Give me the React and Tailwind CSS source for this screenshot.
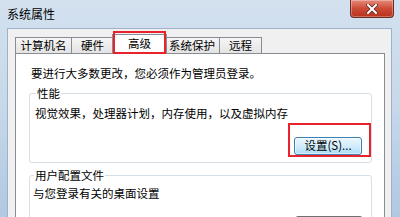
import React from "react";

const font = { fontFamily: '"Noto Sans CJK SC", "Noto Sans", sans-serif' };

function Tab({ label, w, selected }) {
  if (selected) {
    return (
      <div
        className="relative z-10 -mb-px flex h-[20px] items-center justify-center border border-b-0 border-[#898c95] bg-white text-[11.5px] leading-none text-black"
        style={{ width: w }}
      >
        <span className="-mt-px">{label}</span>
      </div>
    );
  }
  return (
    <div
      className="-ml-px flex h-[16px] items-center justify-center border border-b-0 border-[#898c95] bg-gradient-to-b from-[#f6f6f6] to-[#e3e3e3] text-[11.5px] leading-none text-black first:ml-0"
      style={{ width: w }}
    >
      {label}
    </div>
  );
}

function Button({ children, active }) {
  return (
    <div
      className={
        active
          ? "flex h-[18px] w-[68px] items-center justify-center rounded-[3px] border border-[#3c7fb1] bg-gradient-to-b from-[#eaf6fd] via-[#d3eefc] to-[#a9dbf6] text-[11.5px] leading-none text-black shadow-[inset_0_0_0_1px_rgba(255,255,255,0.6)]"
          : "flex h-[18px] w-[68px] items-center justify-center rounded-[3px] border border-[#707070] bg-gradient-to-b from-[#f2f2f2] via-[#ebebeb] to-[#cfcfcf] text-[11.5px] leading-none text-black"
      }
    >
      {children}
    </div>
  );
}

export default function App() {
  return (
    <div
      className="relative h-[217px] w-[400px] overflow-hidden bg-gradient-to-b from-[#d3e1ef] via-[#c6d8ea] to-[#b0c8e1]"
      style={font}
    >
      {/* title bar */}
      <div className="flex h-[28px] items-center pl-[7px] text-[12px] leading-none text-black">
        系统属性
      </div>
      {/* close button */}
      <div className="absolute right-[6px] top-0 flex h-[18px] w-[44px] items-center justify-center rounded-b-[4px] border border-t-0 border-[#6d2c22] bg-gradient-to-b from-[#e5897b] via-[#cc4a35] to-[#b9311d] shadow-[inset_0_0_0_1px_rgba(255,255,255,0.3)]">
        <svg width="12" height="10" viewBox="0 0 12 10">
          <path d="M2 1 L10 9 M10 1 L2 9" stroke="#5a2a24" strokeWidth="3.6" strokeLinecap="square" />
          <path d="M2 1 L10 9 M10 1 L2 9" stroke="#ffffff" strokeWidth="2" strokeLinecap="square" />
        </svg>
      </div>

      {/* dialog body */}
      <div className="ml-[7px] mr-[8px] h-[189px] border border-b-0 border-[#9fb1c7] bg-[#f0f0f0] pl-[7px] pr-[6px] pt-[5px]">
        {/* tabs */}
        <div className="flex items-end">
          <Tab label="计算机名" w={57} />
          <Tab label="硬件" w={43} />
          <div className="-ml-[2px] -mr-[2px]">
            <Tab label="高级" w={55} selected />
          </div>
          <Tab label="系统保护" w={56} />
          <Tab label="远程" w={43} />
        </div>
        {/* panel */}
        <div className="h-[170px] border border-b-0 border-[#898c95] bg-white pl-[13px] pr-[12px] pt-[12px] text-[11.5px] leading-[14px] text-black">
          <div className="pl-[2px]">要进行大多数更改，您必须作为管理员登录。</div>

          <fieldset className="mt-[6px] h-[77px] rounded-[3px] border border-[#d5dfe5] px-[5px]">
            <legend className="ml-[1px] px-[1px] text-[11.5px] leading-[14px]">性能</legend>
            <div className="pt-[6px]">视觉效果，处理器计划，内存使用，以及虚拟内存</div>
            <div className="mt-[17px] flex justify-end pr-[4px]">
              <Button active>设置(S)...</Button>
            </div>
          </fieldset>

          <fieldset className="mt-[5px] h-[60px] rounded-[3px] border border-[#d5dfe5] px-[3px]">
            <legend className="ml-[1px] px-[1px] text-[11.5px] leading-[14px]">用户配置文件</legend>
            <div className="pt-[4px]">与您登录有关的桌面设置</div>
            <div className="mt-[16px] flex justify-end pr-[5px]">
              <Button>设置(E)...</Button>
            </div>
          </fieldset>
        </div>
      </div>

      {/* red annotation boxes */}
      <div className="pointer-events-none absolute left-[113px] top-[31px] z-20 h-[23px] w-[53px] border-[2px] border-[#e8232b]" />
      <div className="pointer-events-none absolute left-[288px] top-[123px] z-20 h-[34px] w-[83px] border-[2px] border-[#e8232b]" />
    </div>
  );
}
